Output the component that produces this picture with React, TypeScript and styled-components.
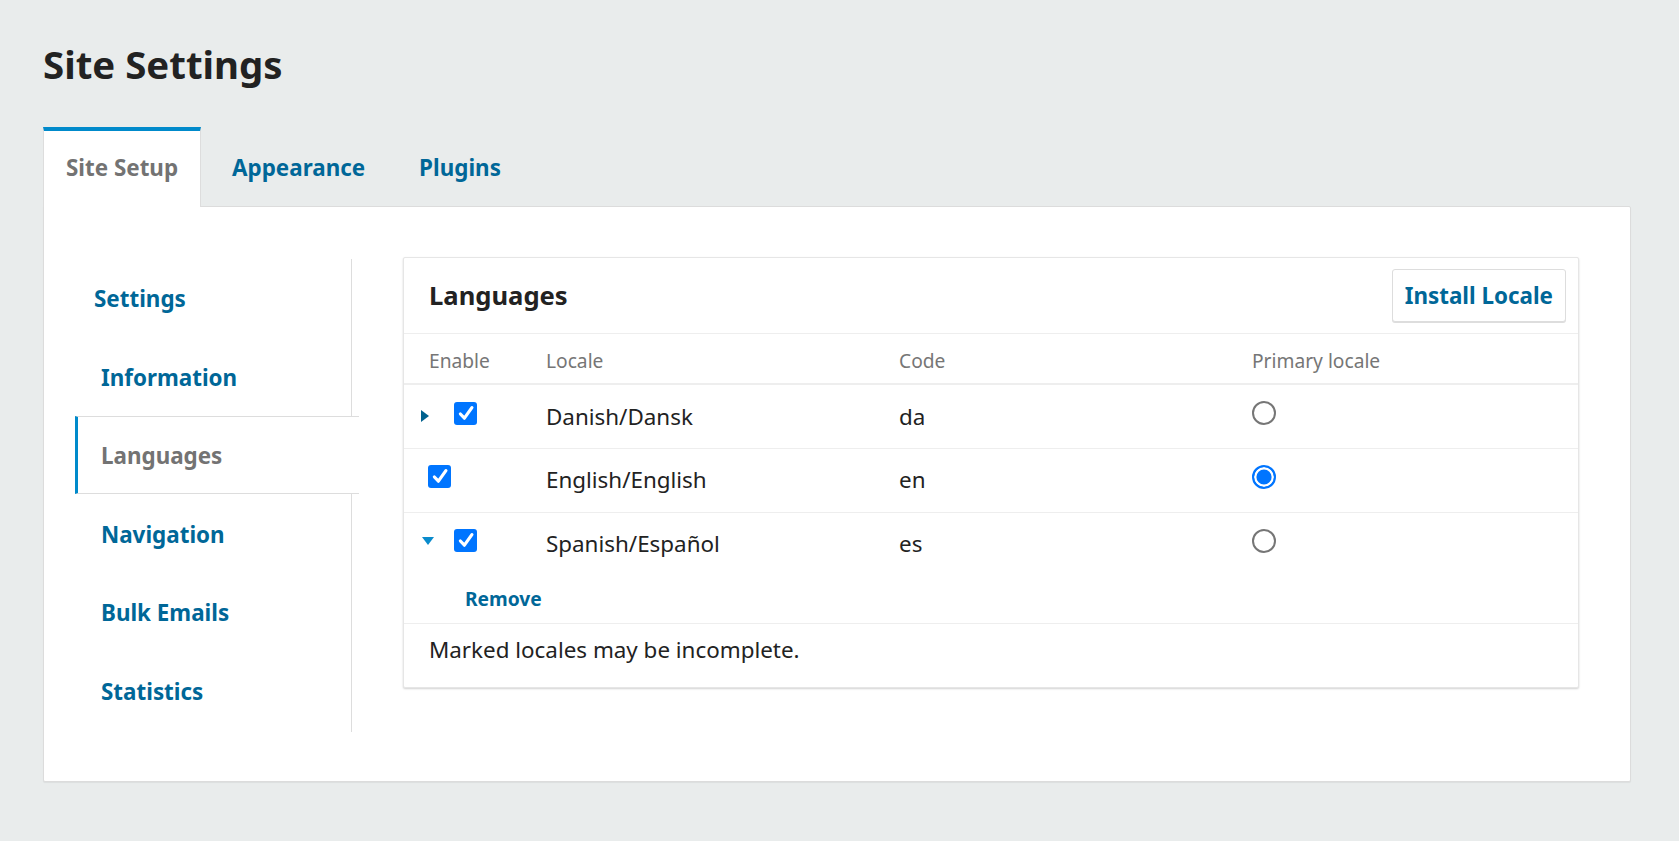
import styled, { createGlobalStyle } from "styled-components";

const GlobalStyle = createGlobalStyle`
  html, body {
    margin: 0;
    background: #e9ecec;
  }
  body {
    font-family: "Noto Sans", "Open Sans", sans-serif;
    color: #222;
  }
  * {
    box-sizing: border-box;
  }
`;

const navItems = [
  { label: "Settings", top: true },
  { label: "Information" },
  { label: "Languages", active: true },
  { label: "Navigation" },
  { label: "Bulk Emails" },
  { label: "Statistics" },
];

const locales = [
  { name: "Danish/Dansk", code: "da", expander: "closed", primary: false },
  { name: "English/English", code: "en", expander: null, primary: true },
  { name: "Spanish/Español", code: "es", expander: "open", primary: false },
];

const App = () => {
  return (
    <>
      <GlobalStyle />
      <Page>
        <Title>Site Settings</Title>
        <TabList>
          <Tab $active>Site Setup</Tab>
          <Tab>Appearance</Tab>
          <Tab>Plugins</Tab>
        </TabList>
        <Panel>
          <SideNav>
            {navItems.map((item) => (
              <NavItem key={item.label} $active={item.active} $top={item.top}>
                {item.label}
              </NavItem>
            ))}
          </SideNav>
          <Card>
            <CardHeader>
              <CardTitle>Languages</CardTitle>
              <Button>Install Locale</Button>
            </CardHeader>
            <HeadRow>
              <HeadCell $first>Enable</HeadCell>
              <HeadCell>Locale</HeadCell>
              <HeadCell>Code</HeadCell>
              <HeadCell>Primary locale</HeadCell>
            </HeadRow>
            {locales.map((loc) => (
              <Row key={loc.code}>
                <RowMain>
                  <EnableCell>
                    {loc.expander && (
                      <Expander $open={loc.expander === "open"}>
                        {loc.expander === "open" ? (
                          <svg width="12" height="8" viewBox="0 0 12 8">
                            <polygon points="0,0 12,0 6,8" fill="currentColor" />
                          </svg>
                        ) : (
                          <svg width="8" height="12" viewBox="0 0 8 12">
                            <polygon points="0,0 8,6 0,12" fill="currentColor" />
                          </svg>
                        )}
                      </Expander>
                    )}
                    <Checkbox $indent={!loc.expander}>
                      <svg width="23" height="23" viewBox="0 0 23 23">
                        <polyline
                          points="6.4,12 10.4,16.2 17.9,5.6"
                          fill="none"
                          stroke="#fff"
                          strokeWidth="3.2"
                          strokeLinecap="round"
                          strokeLinejoin="round"
                        />
                      </svg>
                    </Checkbox>
                  </EnableCell>
                  <Cell>{loc.name}</Cell>
                  <Cell>{loc.code}</Cell>
                  <Cell>
                    <Radio $checked={loc.primary} />
                  </Cell>
                </RowMain>
                {loc.expander === "open" && (
                  <Details>
                    <LinkButton>Remove</LinkButton>
                  </Details>
                )}
              </Row>
            ))}
            <CardFooter>Marked locales may be incomplete.</CardFooter>
          </Card>
        </Panel>
      </Page>
    </>
  );
};

export default App;

const Page = styled.div`
  padding: 40px 48px 60px 43px;
`;

const Title = styled.h1`
  margin: 0;
  font-size: 38.4px;
  line-height: 48px;
  font-weight: 700;
  color: #222;
`;

const TabList = styled.div`
  display: flex;
  gap: 8px;
  margin-top: 39px;
`;

const Tab = styled.div<{ $active?: boolean }>`
  position: relative;
  z-index: 1;
  margin-bottom: -1px;
  padding: 20px 22px 22px;
  font-size: 22.4px;
  line-height: 33.6px;
  font-weight: 700;
  color: ${(p) => (p.$active ? "#737373" : "#006798")};
  background: ${(p) => (p.$active ? "#fff" : "transparent")};
  border-top: 4px solid ${(p) => (p.$active ? "#008acb" : "transparent")};
  border-left: 1px solid ${(p) => (p.$active ? "#ddd" : "transparent")};
  border-right: 1px solid ${(p) => (p.$active ? "#ddd" : "transparent")};
  cursor: pointer;
`;

const Panel = styled.div`
  display: flex;
  align-items: flex-start;
  padding: 50px 51px 49px 31px;
  background: #fff;
  border: 1px solid #dcdcdc;
  border-radius: 0 2px 2px 2px;
  box-shadow: 0 1px 1px rgba(0, 0, 0, 0.06);
`;

const SideNav = styled.div`
  width: 277px;
  flex-shrink: 0;
  margin-top: 2px;
  padding-bottom: 2px;
  border-right: 1px solid #ddd;
`;

const NavItem = styled.div<{ $active?: boolean; $top?: boolean }>`
  padding: ${(p) =>
    p.$active ? "22.5px 0 20.5px 23px" : p.$top ? "23.5px 0 21.5px 19px" : "23.5px 0 21.5px 26px"};
  margin-right: ${(p) => (p.$active ? "-8px" : "0")};
  font-size: 22.4px;
  line-height: 33.6px;
  font-weight: 700;
  color: ${(p) => (p.$active ? "#737373" : "#006798")};
  background: #fff;
  border-left: ${(p) => (p.$active ? "3px solid #008acb" : "none")};
  border-top: ${(p) => (p.$active ? "1px solid #ddd" : "none")};
  border-bottom: ${(p) => (p.$active ? "1px solid #ddd" : "none")};
  cursor: pointer;
`;

const Card = styled.div`
  flex: 1;
  margin-left: 51px;
  background: #fff;
  border: 1px solid #e6e6e6;
  border-radius: 2px;
  box-shadow: 0 1px 2px rgba(0, 0, 0, 0.18);
`;

const CardHeader = styled.div`
  display: flex;
  align-items: center;
  justify-content: space-between;
  padding: 11px 12px 11px 25px;
  border-bottom: 1px solid #eee;
`;

const CardTitle = styled.h2`
  margin: 0;
  padding-top: 2px;
  font-size: 25.6px;
  line-height: 32px;
  font-weight: 700;
  color: #222;
`;

const Button = styled.button`
  padding: 9.7px 12px 7.7px;
  font-family: inherit;
  font-size: 22.4px;
  line-height: 33.6px;
  font-weight: 700;
  color: #006798;
  background: #fff;
  border: 1px solid #ddd;
  border-radius: 3px;
  box-shadow: 0 1px 0 #ddd;
  cursor: pointer;
`;

const columns = "116px 353px 353px 1fr";

const HeadRow = styled.div`
  display: grid;
  grid-template-columns: ${columns};
  padding: 13.5px 0 7.5px;
  border-bottom: 2px solid #eee;
`;

const HeadCell = styled.div<{ $first?: boolean }>`
  padding-left: ${(p) => (p.$first ? "25px" : "26px")};
  font-size: 19.2px;
  line-height: 28.8px;
  color: #767676;
`;

const Row = styled.div`
  border-bottom: 1px solid #eee;
`;

const RowMain = styled.div`
  display: grid;
  grid-template-columns: ${columns};
  padding: 14.5px 0;
`;

const Cell = styled.div`
  padding-left: 26px;
  font-size: 22.4px;
  line-height: 33.6px;
  color: #222;
`;

const EnableCell = styled.div`
  display: flex;
  align-items: flex-start;
  padding-left: 17px;
`;

const Expander = styled.button<{ $open?: boolean }>`
  display: flex;
  align-items: center;
  width: 33px;
  height: 33px;
  padding: 0 0 ${(p) => (p.$open ? "5px 1px" : "0 0")};
  border: none;
  background: none;
  color: ${(p) => (p.$open ? "#0a8bcc" : "#00618e")};
  cursor: pointer;
`;

const Checkbox = styled.span<{ $indent?: boolean }>`
  display: inline-flex;
  align-items: center;
  justify-content: center;
  width: 23px;
  height: 23px;
  margin-top: 2px;
  margin-left: ${(p) => (p.$indent ? "7px" : "0")};
  background: #0075ff;
  border-radius: 3px;
`;

const Radio = styled.span<{ $checked?: boolean }>`
  display: block;
  width: 24px;
  height: 24px;
  margin-top: 1.5px;
  border-radius: 50%;
  border: 2px solid ${(p) => (p.$checked ? "#0075ff" : "#767676")};
  background: ${(p) => (p.$checked ? "#0075ff" : "#fff")};
  box-shadow: ${(p) => (p.$checked ? "inset 0 0 0 2.4px #fff" : "none")};
`;

const Details = styled.div`
  padding: 10px 0 9.5px 61px;
`;

const LinkButton = styled.button`
  padding: 0;
  font-family: inherit;
  font-size: 19.2px;
  line-height: 28.8px;
  font-weight: 700;
  color: #006798;
  background: none;
  border: none;
  cursor: pointer;
`;

const CardFooter = styled.div`
  padding: 9px 25px 20px;
  font-size: 22.4px;
  line-height: 33.6px;
  color: #222;
`;
